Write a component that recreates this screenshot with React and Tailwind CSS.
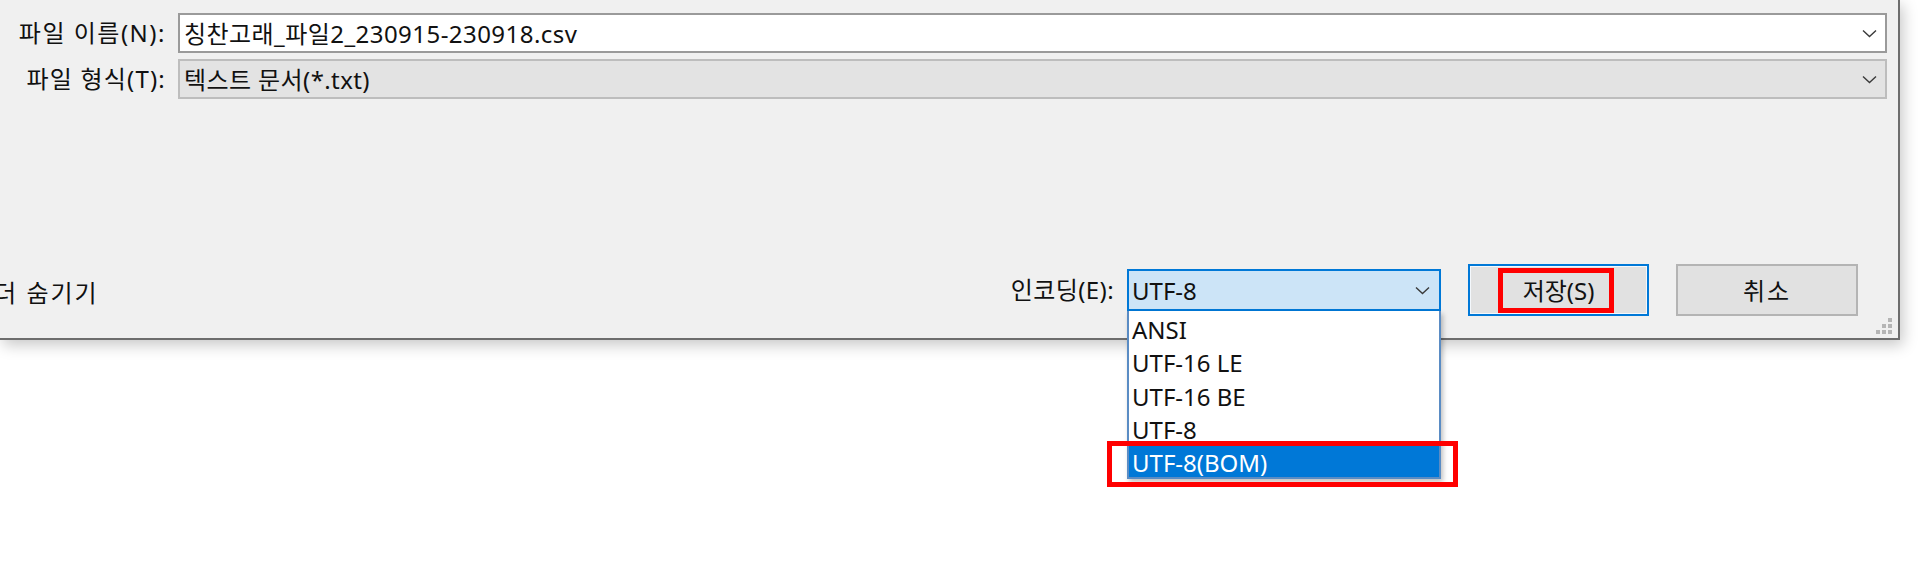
import React from 'react';

const Chevron = () => (
	<svg width="15" height="9" viewBox="0 0 15 9" fill="none">
		<path d="M1 1.5 L7.5 7.5 L14 1.5" stroke="#3a3a3a" strokeWidth="1.4" />
	</svg>
);

const encodings = ['ANSI', 'UTF-16 LE', 'UTF-16 BE', 'UTF-8', 'UTF-8(BOM)'];

const App = () => {
	return (
		<div className="relative w-[1920px] h-[562px] bg-white overflow-hidden font-['Noto_Sans','Noto_Sans_CJK_KR',sans-serif] text-[24px] text-[#111]">
			{/* dialog */}
			<div className="relative w-[1900px] h-[340px] bg-[#f0f0f0] border-r-2 border-b-2 border-[#6d6d6d] shadow-[3px_5px_14px_rgba(0,0,0,0.22)] flex flex-col pt-[13px]">
				<div className="flex items-center h-[40px]">
					<div className="w-[166px] text-right leading-none tracking-[1.5px]">파일 이름(N):</div>
					<div className="ml-[12px] w-[1709px] h-[40px] bg-white border-2 border-[#9a9a9a] flex items-center justify-between pl-[4px] pr-[8px]">
						<span className="leading-none tracking-[0.45px] pt-[2px]">칭찬고래_파일2_230915-230918.csv</span>
						<Chevron />
					</div>
				</div>
				<div className="flex items-center h-[40px] mt-[6px]">
					<div className="w-[166px] text-right leading-none tracking-[1.2px]">파일 형식(T):</div>
					<div className="ml-[12px] w-[1709px] h-[40px] bg-[#e3e3e3] border-2 border-[#bdbdbd] flex items-center justify-between pl-[4px] pr-[8px]">
						<span className="leading-none tracking-[0.4px] pt-[2px]">텍스트 문서(*.txt)</span>
						<Chevron />
					</div>
				</div>

				<div className="mt-auto mb-[22px] h-[52px] flex items-center pr-[40px]">
					<div className="-ml-[30px] leading-none mt-[6px] tracking-[2px] whitespace-nowrap">폴더 숨기기</div>
					<div className="flex-1" />
					<div className="leading-none tracking-[0.4px]">인코딩(E):</div>
					<div className="relative ml-[13px] w-[314px] h-[42px] bg-[#cce4f7] border-2 border-[#0078d7] flex items-center justify-between pl-[3px] pr-[9px]">
						<span className="leading-none pt-[2px]">UTF-8</span>
						<Chevron />
						{/* open dropdown list */}
						<div className="absolute top-[40px] -left-[2px] w-[314px] h-[168px] bg-white border-2 border-t-0 border-[#5a8cc4] flex flex-col shadow-[2px_3px_5px_rgba(0,0,0,0.25)] z-10">
							{encodings.map((enc, i) => (
								<div
									key={enc}
									className={
										i === encodings.length - 1
											? 'flex-1 flex items-center pl-[3px] pt-[5px] bg-[#0078d7] text-white leading-none'
											: 'flex-1 flex items-center pl-[3px] pt-[5px] leading-none'
									}
								>
									{enc}
								</div>
							))}
						</div>
					</div>
					<button className="ml-[27px] w-[181px] h-[52px] bg-[#e1e1e1] border-2 border-[#0078d7] shadow-[inset_0_0_0_1px_#f4f8fc] leading-none pt-[2px]">
						저장(S)
					</button>
					<button className="ml-[27px] w-[182px] h-[52px] bg-[#e1e1e1] border-2 border-[#b4b4b4] leading-none tracking-[2px] pt-[2px]">
						취소
					</button>
				</div>

				{/* resize grip */}
				<div className="absolute right-[6px] bottom-[4px] grid grid-cols-3 gap-[2px] w-[16px]">
					<span />
					<span />
					<span className="w-[4px] h-[4px] bg-[#b5b5b5]" />
					<span />
					<span className="w-[4px] h-[4px] bg-[#b5b5b5]" />
					<span className="w-[4px] h-[4px] bg-[#b5b5b5]" />
					<span className="w-[4px] h-[4px] bg-[#b5b5b5]" />
					<span className="w-[4px] h-[4px] bg-[#b5b5b5]" />
					<span className="w-[4px] h-[4px] bg-[#b5b5b5]" />
				</div>
			</div>

			{/* red annotation boxes */}
			<div className="absolute left-[1498px] top-[268px] w-[116px] h-[45px] border-[5px] border-[#ff0000] z-20" />
			<div className="absolute left-[1107px] top-[441px] w-[351px] h-[46px] border-[5px] border-[#ff0000] z-20" />
		</div>
	);
};

export default App;
